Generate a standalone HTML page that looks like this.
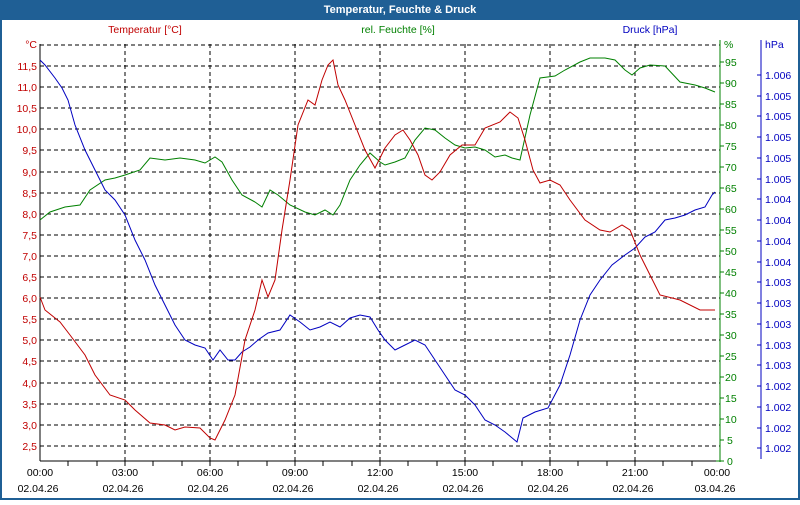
<!DOCTYPE html>
<html><head><meta charset="utf-8"><style>
html,body{margin:0;padding:0;background:#fff;}
body{width:800px;height:500px;overflow:hidden;font-family:"Liberation Sans",sans-serif;}
</style></head><body>
<svg width="800" height="500" xmlns="http://www.w3.org/2000/svg" font-family="Liberation Sans, sans-serif" font-size="10.5">
<rect x="0" y="0" width="800" height="500" fill="#fff"/>
<rect x="0" y="0" width="800" height="20" fill="#1f5f95"/>
<rect x="0" y="0" width="2" height="500" fill="#1f5f95"/>
<rect x="798" y="0" width="2" height="500" fill="#1f5f95"/>
<rect x="0" y="498" width="800" height="2" fill="#1f5f95"/>
<text x="400" y="13" fill="#fff" font-weight="bold" font-size="11" text-anchor="middle">Temperatur, Feuchte &amp; Druck</text>
<text x="145" y="33" fill="#c00000" text-anchor="middle">Temperatur [°C]</text>
<text x="398" y="33" fill="#008000" text-anchor="middle">rel. Feuchte [%]</text>
<text x="650" y="33" fill="#0000c0" text-anchor="middle">Druck [hPa]</text>
<g stroke="#000" stroke-dasharray="4,3" stroke-width="1" shape-rendering="crispEdges">
<line x1="40" y1="45" x2="720" y2="45"/>
<line x1="40" y1="66" x2="720" y2="66"/><line x1="40" y1="87" x2="720" y2="87"/><line x1="40" y1="108" x2="720" y2="108"/><line x1="40" y1="129" x2="720" y2="129"/><line x1="40" y1="150" x2="720" y2="150"/><line x1="40" y1="172" x2="720" y2="172"/><line x1="40" y1="193" x2="720" y2="193"/><line x1="40" y1="214" x2="720" y2="214"/><line x1="40" y1="235" x2="720" y2="235"/><line x1="40" y1="256" x2="720" y2="256"/><line x1="40" y1="277" x2="720" y2="277"/><line x1="40" y1="298" x2="720" y2="298"/><line x1="40" y1="319" x2="720" y2="319"/><line x1="40" y1="340" x2="720" y2="340"/><line x1="40" y1="361" x2="720" y2="361"/><line x1="40" y1="383" x2="720" y2="383"/><line x1="40" y1="404" x2="720" y2="404"/><line x1="40" y1="425" x2="720" y2="425"/><line x1="40" y1="446" x2="720" y2="446"/>
<line x1="125" y1="44" x2="125" y2="461"/><line x1="210" y1="44" x2="210" y2="461"/><line x1="295" y1="44" x2="295" y2="461"/><line x1="380" y1="44" x2="380" y2="461"/><line x1="465" y1="44" x2="465" y2="461"/><line x1="550" y1="44" x2="550" y2="461"/><line x1="635" y1="44" x2="635" y2="461"/>
</g>
<g stroke="#000" shape-rendering="crispEdges">
<line x1="40" y1="44" x2="40" y2="461"/>
<line x1="40" y1="461" x2="720" y2="461"/>
<line x1="68" y1="461" x2="68" y2="466"/><line x1="97" y1="461" x2="97" y2="466"/><line x1="125" y1="461" x2="125" y2="466"/><line x1="153" y1="461" x2="153" y2="466"/><line x1="182" y1="461" x2="182" y2="466"/><line x1="210" y1="461" x2="210" y2="466"/><line x1="238" y1="461" x2="238" y2="466"/><line x1="267" y1="461" x2="267" y2="466"/><line x1="295" y1="461" x2="295" y2="466"/><line x1="323" y1="461" x2="323" y2="466"/><line x1="352" y1="461" x2="352" y2="466"/><line x1="380" y1="461" x2="380" y2="466"/><line x1="408" y1="461" x2="408" y2="466"/><line x1="437" y1="461" x2="437" y2="466"/><line x1="465" y1="461" x2="465" y2="466"/><line x1="493" y1="461" x2="493" y2="466"/><line x1="522" y1="461" x2="522" y2="466"/><line x1="550" y1="461" x2="550" y2="466"/><line x1="578" y1="461" x2="578" y2="466"/><line x1="607" y1="461" x2="607" y2="466"/><line x1="635" y1="461" x2="635" y2="466"/><line x1="663" y1="461" x2="663" y2="466"/><line x1="692" y1="461" x2="692" y2="466"/>
</g>
<line x1="720" y1="40" x2="720" y2="462" stroke="#008000" shape-rendering="crispEdges"/>
<line x1="761" y1="40" x2="761" y2="459" stroke="#0000c0" shape-rendering="crispEdges"/>
<g fill="#c00000" text-anchor="end">
<text x="37" y="48">°C</text>
<text x="37" y="70">11,5</text><text x="37" y="91">11,0</text><text x="37" y="112">10,5</text><text x="37" y="133">10,0</text><text x="37" y="154">9,5</text><text x="37" y="176">9,0</text><text x="37" y="197">8,5</text><text x="37" y="218">8,0</text><text x="37" y="239">7,5</text><text x="37" y="260">7,0</text><text x="37" y="281">6,5</text><text x="37" y="302">6,0</text><text x="37" y="323">5,5</text><text x="37" y="344">5,0</text><text x="37" y="365">4,5</text><text x="37" y="387">4,0</text><text x="37" y="408">3,5</text><text x="37" y="429">3,0</text><text x="37" y="450">2,5</text>
</g>
<g stroke="#008000" shape-rendering="crispEdges">
<line x1="720" y1="62" x2="724" y2="62"/><line x1="720" y1="83" x2="724" y2="83"/><line x1="720" y1="104" x2="724" y2="104"/><line x1="720" y1="125" x2="724" y2="125"/><line x1="720" y1="146" x2="724" y2="146"/><line x1="720" y1="167" x2="724" y2="167"/><line x1="720" y1="188" x2="724" y2="188"/><line x1="720" y1="209" x2="724" y2="209"/><line x1="720" y1="230" x2="724" y2="230"/><line x1="720" y1="251" x2="724" y2="251"/><line x1="720" y1="272" x2="724" y2="272"/><line x1="720" y1="293" x2="724" y2="293"/><line x1="720" y1="314" x2="724" y2="314"/><line x1="720" y1="335" x2="724" y2="335"/><line x1="720" y1="356" x2="724" y2="356"/><line x1="720" y1="377" x2="724" y2="377"/><line x1="720" y1="398" x2="724" y2="398"/><line x1="720" y1="419" x2="724" y2="419"/><line x1="720" y1="440" x2="724" y2="440"/><line x1="716" y1="461" x2="724" y2="461"/>
</g>
<g fill="#008000">
<text x="724" y="48">%</text>
<text x="725" y="66">95</text><text x="725" y="87">90</text><text x="725" y="108">85</text><text x="725" y="129">80</text><text x="725" y="150">75</text><text x="725" y="171">70</text><text x="725" y="192">65</text><text x="725" y="213">60</text><text x="725" y="234">55</text><text x="725" y="255">50</text><text x="725" y="276">45</text><text x="725" y="297">40</text><text x="725" y="318">35</text><text x="725" y="339">30</text><text x="725" y="360">25</text><text x="725" y="381">20</text><text x="725" y="402">15</text><text x="725" y="423">10</text><text x="727" y="444">5</text><text x="727" y="465">0</text>
</g>
<g stroke="#0000c0" shape-rendering="crispEdges">
<line x1="757" y1="75" x2="761" y2="75"/><line x1="757" y1="96" x2="761" y2="96"/><line x1="757" y1="116" x2="761" y2="116"/><line x1="757" y1="137" x2="761" y2="137"/><line x1="757" y1="158" x2="761" y2="158"/><line x1="757" y1="179" x2="761" y2="179"/><line x1="757" y1="199" x2="761" y2="199"/><line x1="757" y1="220" x2="761" y2="220"/><line x1="757" y1="241" x2="761" y2="241"/><line x1="757" y1="262" x2="761" y2="262"/><line x1="757" y1="282" x2="761" y2="282"/><line x1="757" y1="303" x2="761" y2="303"/><line x1="757" y1="324" x2="761" y2="324"/><line x1="757" y1="345" x2="761" y2="345"/><line x1="757" y1="365" x2="761" y2="365"/><line x1="757" y1="386" x2="761" y2="386"/><line x1="757" y1="407" x2="761" y2="407"/><line x1="757" y1="428" x2="761" y2="428"/><line x1="757" y1="448" x2="761" y2="448"/>
</g>
<g fill="#0000c0">
<text x="765" y="48">hPa</text>
<text x="765" y="79">1.006</text><text x="765" y="100">1.005</text><text x="765" y="120">1.005</text><text x="765" y="141">1.005</text><text x="765" y="162">1.005</text><text x="765" y="183">1.005</text><text x="765" y="203">1.004</text><text x="765" y="224">1.004</text><text x="765" y="245">1.004</text><text x="765" y="266">1.004</text><text x="765" y="286">1.003</text><text x="765" y="307">1.003</text><text x="765" y="328">1.003</text><text x="765" y="349">1.003</text><text x="765" y="369">1.003</text><text x="765" y="390">1.002</text><text x="765" y="411">1.002</text><text x="765" y="432">1.002</text><text x="765" y="452">1.002</text>
</g>
<g fill="#000" text-anchor="middle">
<text x="40" y="476">00:00</text><text x="125" y="476">03:00</text><text x="210" y="476">06:00</text><text x="295" y="476">09:00</text><text x="380" y="476">12:00</text><text x="465" y="476">15:00</text><text x="550" y="476">18:00</text><text x="635" y="476">21:00</text><text x="717" y="476">00:00</text>
<text x="38" y="492">02.04.26</text><text x="123" y="492">02.04.26</text><text x="208" y="492">02.04.26</text><text x="293" y="492">02.04.26</text><text x="378" y="492">02.04.26</text><text x="463" y="492">02.04.26</text><text x="548" y="492">02.04.26</text><text x="633" y="492">02.04.26</text><text x="715" y="492">03.04.26</text>
</g>
<polyline fill="none" stroke="#008000" stroke-width="1" points="40,220 50,212 65,207 80,205 90,190 105,180 115,178 125,175 140,170 150,158 165,160 180,158 195,160 205,163 215,157 222,162 232,180 242,195 255,202 262,207 270,190 278,195 290,205 305,212 315,215 325,210 333,215 340,205 350,180 360,165 370,153 380,162 385,165 395,162 405,158 415,140 425,128 435,130 445,138 455,145 465,148 475,147 485,150 495,157 505,155 512,158 520,160 530,115 540,78 555,76 565,70 580,62 590,58 605,58 615,60 625,70 632,75 640,68 650,65 665,66 680,82 695,85 705,88 715,92"/>
<polyline fill="none" stroke="#0000c0" stroke-width="1" points="40,60 45,65 55,78 62,88 68,100 75,125 85,150 95,170 105,190 115,200 125,215 135,240 145,260 155,285 165,305 175,325 185,340 195,345 205,348 213,360 220,350 228,360 235,360 242,352 250,347 258,340 268,333 280,330 290,315 300,322 310,330 320,327 330,322 340,327 350,318 360,315 370,317 378,330 385,340 395,350 405,345 415,340 425,345 435,360 445,375 455,390 465,395 475,405 485,420 495,425 505,432 517,442 523,418 535,412 548,408 560,385 570,355 580,320 590,295 600,280 612,265 625,255 635,248 645,237 655,232 665,220 675,218 685,215 695,210 705,207 712,195 715,192"/>
<polyline fill="none" stroke="#c00000" stroke-width="1" points="40,297 45,310 60,322 70,335 85,355 95,375 110,395 125,400 135,410 150,423 165,425 175,430 185,427 200,428 210,438 215,440 225,420 235,395 245,340 255,310 262,280 268,297 275,280 282,230 290,180 298,125 308,100 315,105 322,80 328,65 333,60 338,85 345,100 355,125 365,150 375,168 385,148 395,135 403,130 410,140 418,155 425,175 432,180 440,172 450,155 462,145 475,145 485,128 500,122 510,112 518,118 525,140 533,170 540,183 550,180 560,185 570,200 585,220 600,230 610,232 622,225 630,230 640,255 650,275 660,295 680,300 700,310 715,310"/>
</svg>
</body></html>
